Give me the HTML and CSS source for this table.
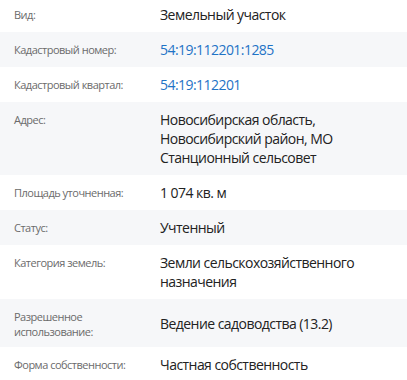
FILE: index.html
```html
<!DOCTYPE html>
<html lang="ru">
<head>
<meta charset="utf-8">
<link rel="stylesheet" href="styles.css">
</head>
<body>
<div class="props">
  <div class="row">
    <div class="label">Вид:</div>
    <div class="value">Земельный участок</div>
  </div>
  <div class="row alt">
    <div class="label">Кадастровый номер:</div>
    <div class="value"><a class="link" href="#">54:19:112201:1285</a></div>
  </div>
  <div class="row">
    <div class="label">Кадастровый квартал:</div>
    <div class="value"><a class="link" href="#">54:19:112201</a></div>
  </div>
  <div class="row alt">
    <div class="label">Адрес:</div>
    <div class="value">Новосибирская область,<br>Новосибирский район, МО<br>Станционный сельсовет</div>
  </div>
  <div class="row">
    <div class="label">Площадь уточненная:</div>
    <div class="value">1 074 кв. м</div>
  </div>
  <div class="row alt">
    <div class="label">Статус:</div>
    <div class="value">Учтенный</div>
  </div>
  <div class="row">
    <div class="label">Категория земель:</div>
    <div class="value">Земли сельскохозяйственного<br>назначения</div>
  </div>
  <div class="row alt">
    <div class="label">Разрешенное<br>использование:</div>
    <div class="value">Ведение садоводства (13.2)</div>
  </div>
  <div class="row">
    <div class="label">Форма собственности:</div>
    <div class="value">Частная собственность</div>
  </div>
</div>
</body>
</html>
```
FILE: styles.css
```css
html, body {
  margin: 0;
  padding: 0;
  background: #ffffff;
}
body {
  font-family: "Open Sans", "Noto Sans", sans-serif;
  width: 407px;
  height: 380px;
  overflow: hidden;
}
.props {
  margin-top: -3px;
}
.row {
  display: grid;
  grid-template-columns: 146px 1fr;
  padding: 8px 0 8px 14px;
}
.row.alt {
  background: #f6f7f9;
}
.label {
  align-self: start;
  font-size: 11px;
  line-height: 15px;
  letter-spacing: -0.5px;
  color: #6b6b6b;
  padding-top: 2px;
}
.value {
  align-self: center;
  font-size: 14px;
  line-height: 19px;
  letter-spacing: -0.55px;
  color: #222222;
}
.link {
  color: #1f73c6;
  text-decoration: none;
}
```
